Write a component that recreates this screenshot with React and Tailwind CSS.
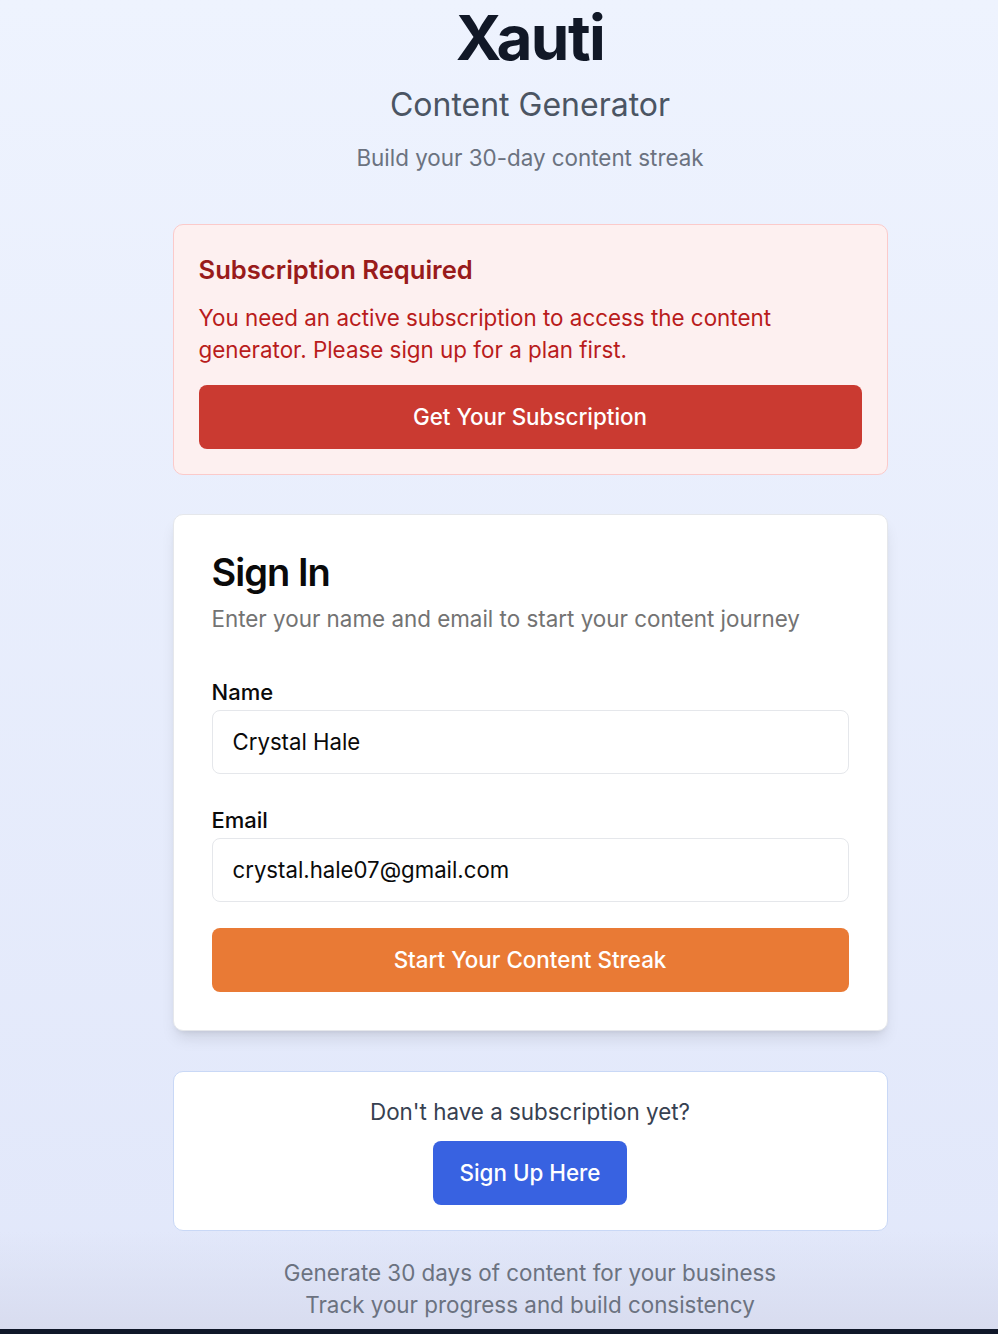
import React from 'react';

const App = () => {
  return (
    <div
      className="min-h-[1334px] flex flex-col bg-gradient-to-b from-[#eef3fe] to-[#e1e7fa]"
      style={{ fontFamily: 'Inter, "Noto Sans", sans-serif' }}
    >
      <div className="flex-1 flex justify-center pl-[62px]">
        <div className="w-[715px] flex flex-col">
          {/* Header */}
          <div className="text-center pt-[6px]">
            <h1 className="text-[62px] leading-[64px] font-bold text-[#111827] tracking-tight">Xauti</h1>
            <h2 className="mt-[15px] text-[32px] leading-[40px] text-[#4b5563]">Content Generator</h2>
            <p className="mt-[17px] text-[22.4px] leading-[32px] text-[#6b7280]">Build your 30-day content streak</p>
          </div>

          {/* Subscription notice */}
          <div className="mt-[50px] rounded-[10px] border border-[#fbcaca] bg-[#fdf0f0] px-[25px] pt-[25px] pb-[25px]">
            <h3 className="text-[25.6px] leading-[40px] font-semibold text-[#991b1b]">Subscription Required</h3>
            <p className="mt-[12px] text-[22.4px] leading-[32px] text-[#b91c1c]">
              You need an active subscription to access the content generator. Please sign up for a plan first.
            </p>
            <button className="mt-[19px] w-full h-[64px] rounded-lg bg-[#ca3a31] text-white text-[22.4px] font-medium">
              Get Your Subscription
            </button>
          </div>

          {/* Sign in card */}
          <div className="mt-[39px] rounded-[10px] border border-[#e5e7eb] bg-white px-[38px] pt-[37px] pb-[38px] shadow-lg">
            <h3 className="text-[38px] leading-[40px] font-semibold text-[#0a0a0a] tracking-tight">Sign In</h3>
            <p className="mt-[11px] text-[22.4px] leading-[32px] text-[#737373]">
              Enter your name and email to start your content journey
            </p>

            <div className="mt-[45px]">
              <label className="block text-[22px] leading-[24px] font-medium text-[#0a0a0a]">Name</label>
              <div className="mt-[6px] h-[64px] rounded-lg border border-[#e5e7eb] flex items-center px-[20px] text-[22.2px] text-[#0a0a0a]">
                Crystal Hale
              </div>
            </div>

            <div className="mt-[34px]">
              <label className="block text-[22px] leading-[24px] font-medium text-[#0a0a0a]">Email</label>
              <div className="mt-[6px] h-[64px] rounded-lg border border-[#e5e7eb] flex items-center px-[20px] text-[22.2px] text-[#0a0a0a]">
                crystal.hale07@gmail.com
              </div>
            </div>

            <button className="mt-[26px] w-full h-[64px] rounded-lg bg-[#e97a35] text-white text-[22.4px] font-medium">
              Start Your Content Streak
            </button>
          </div>

          {/* Sign up prompt */}
          <div className="mt-[40px] rounded-[10px] border border-[#c9d8f6] bg-white pt-[24px] pb-[25px] flex flex-col items-center">
            <p className="text-[22.4px] leading-[32px] text-[#374151]">Don't have a subscription yet?</p>
            <button className="mt-[13px] h-[64px] px-[26px] rounded-lg bg-[#3862e1] text-white text-[22.4px] font-medium">
              Sign Up Here
            </button>
          </div>
        </div>
      </div>

      {/* Footer text */}
      <div className="bg-gradient-to-b from-transparent to-[#d8dcef] pt-[26px] pb-[8px] flex justify-center pl-[62px]">
        <div className="text-center text-[22.4px] leading-[32px] text-[#6b7280]">
          <p>Generate 30 days of content for your business</p>
          <p>Track your progress and build consistency</p>
        </div>
      </div>
      <div className="h-[5px] bg-[#0f1729]" />
    </div>
  );
};

export default App;
